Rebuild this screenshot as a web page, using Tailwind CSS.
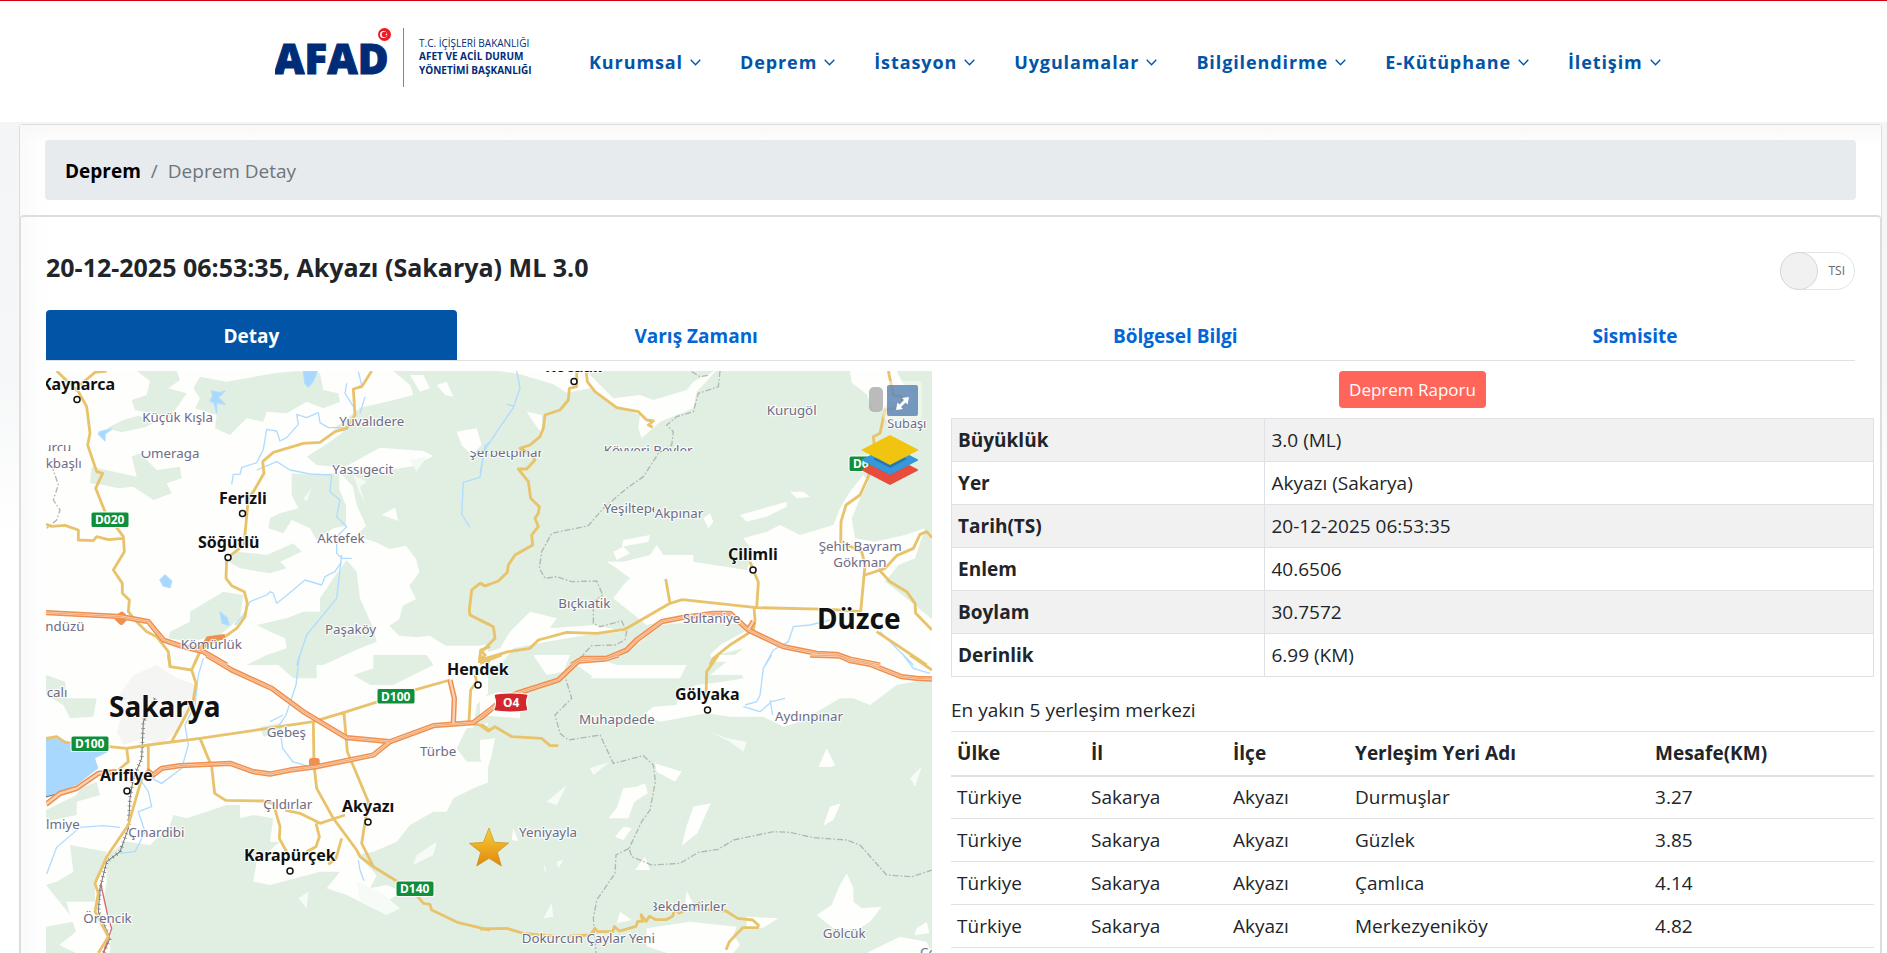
<!DOCTYPE html>
<html lang="tr">
<head>
    <meta charset="UTF-8">
    <meta name="viewport" content="width=device-width, initial-scale=1.0">
    <title>AFAD - Deprem Detay</title>
    <script src="https://cdn.jsdelivr.net/npm/@tailwindcss/browser@4"></script>
</head>
<body class="flex h-screen flex-col overflow-hidden bg-white font-['Open_Sans','Noto_Sans',sans-serif] text-[19px] text-[#212529]">

    <!-- Header -->
    <header class="flex h-[122px] shrink-0 items-start border-t border-[#d2000f] bg-white pl-[275px]">
        <a href="#" aria-label="AFAD" class="mt-[27px] block shrink-0">
            <svg width="264" height="60" viewBox="0 0 264 60" fill="#002c77" class="font-['Open_Sans','Noto_Sans',sans-serif]">
                <text x="-1" y="46" font-size="42" font-weight="800" stroke="#002c77" stroke-width="1">AFAD</text>
                <circle cx="109.500" cy="6.500" r="6.500" fill="#ed1c24"/>
                <circle cx="108.500" cy="6.500" r="3.500" fill="#fff"/>
                <circle cx="109.500" cy="6.500" r="2.800" fill="#ed1c24"/>
                <path d="M110 6.500l2.600-1-1.500 2.300v-2.600l1.500 2.300z" fill="#fff"/>
                <path d="M128.500 0v59" stroke="#6f86b0"/>
                <text x="144" y="19" font-size="10">T.C. İÇİŞLERİ BAKANLIĞI</text>
                <text x="144" y="32" font-size="10" font-weight="700">AFET VE ACİL DURUM</text>
                <text x="144" y="46" font-size="10" font-weight="700">YÖNETİMİ BAŞKANLIĞI</text>
            </svg>
        </a>
        <nav class="ml-[50px] mt-[48px] flex gap-[39px] whitespace-nowrap text-[18px] leading-[26px] font-bold tracking-wider text-[#0254a6]">
            <a href="#" class="flex items-center gap-[7px]">Kurumsal <svg width="11" height="7" viewBox="0 0 11 7" fill="none" stroke="currentColor" stroke-width="1.300"><path d="M.7.8l4.800 5 4.800-5"/></svg></a>
            <a href="#" class="flex items-center gap-[7px]">Deprem <svg width="11" height="7" viewBox="0 0 11 7" fill="none" stroke="currentColor" stroke-width="1.300"><path d="M.7.8l4.800 5 4.800-5"/></svg></a>
            <a href="#" class="flex items-center gap-[7px]">İstasyon <svg width="11" height="7" viewBox="0 0 11 7" fill="none" stroke="currentColor" stroke-width="1.300"><path d="M.7.8l4.800 5 4.800-5"/></svg></a>
            <a href="#" class="flex items-center gap-[7px]">Uygulamalar <svg width="11" height="7" viewBox="0 0 11 7" fill="none" stroke="currentColor" stroke-width="1.300"><path d="M.7.8l4.800 5 4.800-5"/></svg></a>
            <a href="#" class="flex items-center gap-[7px]">Bilgilendirme <svg width="11" height="7" viewBox="0 0 11 7" fill="none" stroke="currentColor" stroke-width="1.300"><path d="M.7.8l4.800 5 4.800-5"/></svg></a>
            <a href="#" class="flex items-center gap-[7px]">E-Kütüphane <svg width="11" height="7" viewBox="0 0 11 7" fill="none" stroke="currentColor" stroke-width="1.300"><path d="M.7.8l4.800 5 4.800-5"/></svg></a>
            <a href="#" class="flex items-center gap-[7px]">İletişim <svg width="11" height="7" viewBox="0 0 11 7" fill="none" stroke="currentColor" stroke-width="1.300"><path d="M.7.8l4.800 5 4.800-5"/></svg></a>
        </nav>
    </header>

    <!-- Page -->
    <main class="flex min-h-0 flex-1 flex-col bg-linear-to-b from-[#f4f5f6] via-[#f6f7f8] via-30% to-white to-50% pt-[2px] pr-[5px] pl-[19px]">
        <div class="flex min-h-0 flex-1 flex-col rounded-t border border-b-0 border-[#dcdede] bg-white bg-linear-to-r from-[#fafafa] to-white to-[28px]">
            <div class="bg-linear-to-b from-[#f8f8f8] to-transparent to-[20px] px-[25px] pt-[15px] pb-[15px]">
                <ol class="flex h-[60px] items-center rounded bg-[#e7ebee] px-5 pt-[2px]">
                    <li><a href="#" class="font-bold text-black">Deprem</a></li>
                    <li class="text-[#6c757d]"><span class="px-[10px]">/</span>Deprem Detay</li>
                </ol>
            </div>

            <div class="flex min-h-0 flex-1 flex-col rounded-t border border-t-2 border-b-0 border-[#dcdede] px-[25px] pt-[35px]">
                <div class="flex items-start justify-between">
                    <h1 class="text-[25px] leading-[30px] font-bold">20-12-2025 06:53:35, Akyazı (Sakarya) ML 3.0</h1>
                    <label class="relative flex h-[38px] w-[75px] items-center justify-end rounded-full border border-[#e4e4e4] bg-white pr-[9px] text-[12px] text-[#666]">
                        <input type="checkbox" class="absolute top-[-1px] left-[-1px] size-[38px] appearance-none rounded-full border border-[#d8d8d8] bg-[#f1f1f1]">
                        TSI
                    </label>
                </div>

                <!-- Tabs -->
                <div role="tablist" class="mt-[20px] flex border-b border-[#dee2e6] font-bold text-[#0366d6]">
                    <button role="tab" aria-selected="true" class="h-[50px] flex-auto rounded-t bg-[#0254a6] px-5 pt-[2px] text-white">Detay</button>
                    <button role="tab" class="h-[50px] flex-auto px-5 pt-[2px]">Varış Zamanı</button>
                    <button role="tab" class="h-[50px] flex-auto px-5 pt-[2px]">Bölgesel Bilgi</button>
                    <button role="tab" class="h-[50px] flex-auto px-5 pt-[2px]">Sismisite</button>
                </div>

                <div class="mt-[10px] -mr-[19px] grid min-h-0 flex-1 grid-cols-[24fr_25fr] gap-[19px]">
                    <!-- Map -->
                    <div class="relative overflow-hidden bg-[#e1efe2]">
                        <svg viewBox="0 0 886 582" preserveAspectRatio="xMinYMin slice" class="absolute inset-0 size-full font-['Noto_Sans',sans-serif]">
                            <defs>
                                <clipPath id="above"><path d="M-100 0h1500v258H-100z"/></clipPath>
                                <clipPath id="below"><path d="M-100 258h1500v300H-100z"/></clipPath>
                                <clipPath id="bekdemir"><path d="M521 700h300v100H521z"/></clipPath>
                                <clipPath id="yesil"><path d="M300 400h222v80H300z"/></clipPath>
                                <linearGradient id="gold" x2="0" y2="1"><stop offset="0" stop-color="#f7d038"/><stop offset="1" stop-color="#e2860b"/></linearGradient>
                            </defs>
                            <path d="M0 0h442v582H0z" fill="#fefefd"/>

                            <!-- Land: north west -->
                            <g transform="translate(-6 -6) scale(.33333)" fill="#e1efe2">
                                <path d="M1060 18l50 42 10 30-80 20-80 18-50 42-30 20 30 10-40 30-70 45 30 25 80 8 110-60 130 10 30 15-60 30-90 15-110 2-95 10-70-5v65l20 40-55 15-30 15-5 30 45 15 25-40 55 25 20 35 50-35 38-8v-60l-20-50 0-50 40 40 12 58 28 62-30 30 60 20 40 20 50-10 30 40 10 40-30 40 20 40-40 20-10 40-30 20 30 30 50 5 40-5 50 30h100l50-10h30V18z"/>
                                <path d="M290 18l40 30-10 42-45 15 10 30 50 10 50 20 55-80-55-15 35-25-10-27zM250 165l-50 25 45 12 70-15 30-15-50-20z"/>
                                <path d="M480 35l80 15 140-25 70-7 70 7 10 50 45 10 5 25-50 20-50-20-60 35-60-5-10 30-50-10-50 50-45-20 5-40-65-20 15-30-20-30z"/>
                                <path d="M155 305l135 30-15-60 25-10 50 50 70-10 5 35-45 15 15 30-55 20-60-40-45 5-45-10-40-5z"/>
                                <path d="M590 560l90 10 80-35 25 25-65 30 20 20-50 15-90-15-35-20z"/>
                                <path d="M390 800l60-30v-30l100-60 60 10-10 70-60 50-90 20-65-10z"/>
                                <path d="M920 585l30 35 10 80 40 90 10 40-50 20-110 50H620l60-30 60-20-5-30-45-20-40-20 90-20 50-20h50v-40l40-60z"/>
                                <path d="M1025 450l40-22 10 40-25-10z" fill="#fefefd"/>
                                <path d="M1250 200l60-10 15 50-30 30-30-30zM1110 30l40 0 20 40-30 10zM1190 60l30-10 20 45-25-5z" fill="#fefefd"/>
                                <path d="M940 330l40 20-20 15 15 50-20-40zM1110 285l50-10-30 45zM790 400l25-30-15 40z" fill="#f3f9f3"/>
                            </g>
                            <!-- Land: north east -->
                            <g transform="translate(434 -6) scale(.33333)" fill="#fefefd">
                                <path d="M60 18l60 10 100 30 40 25 70-13 70 50 80 30-5 40 10 30 55-50 100-40 10-50 60-65-70 35-20 25-100 30-40-15-80 10-70-70-10-12z"/>
                                <path d="M140 140l45 10 5 60-20-25z"/>
                                <path d="M1110 18l5 35 45 35 20 50 30-10 20-20 60 10 20-20-40-40-20-40z"/>
                                <path d="M400 700l30-40 20-20-40-30-30-20h50l80-20 20-30 20 30h90v20l60 10 100 15 20-55-30-40 70-20 40-20 60 30 100-30 20-50 30-50 40-50 15 20-25 50-25 60 10 60 60 10 90-20 60-20-30 90-50 20-40 50 40 30 110 90v160H690l100-80-80 20-70 0-20 30-20 40H330l80-60 130-110-40 10z"/>
                                <path d="M90 800l60-60 80 20-20 30 140-10 80 20-110 10-120 20-100 20-40 50H0v-30l60-20z"/>
                                <path d="M780 450l140-40 0 15-60 30-60 15zM930 380l40 0 20 15-40 5zM670 460l20-15 10 25-15 20zM430 525l80-15-5 20-80 15zM400 560l30-15 20 20-40 20z"/>
                                <path d="M640 770l190 10-110 60-60 60-70 0-250 0 60-20 80-50 60-50z" fill="#e1efe2"/>
                            </g>
                            <!-- Land: south west -->
                            <g transform="translate(-6 284) scale(.33333)" fill="#e1efe2">
                                <path d="M200 600l60-40 70 10 60-60 10-30 40 10 60-20 60-20h40v40l40-10 60 10-10 70h30l-70 60-10 60 50 10 150-40h60l-40 50 60 20 80 40 90-50-50-20-50 10 20-40-60-60 50-10 70-30 40-50 70-40h40l20-40 60-30 50-20v514H210l5-94-25-60 10-60z"/>
                                <path d="M18 60l57 20 5 50h90l-10 55-70 5-20-40-52-30zM90 570l110 20-35 90v60H80l10 40-72-90 32-10 50-30zM18 815l80-15 10 30-50 40 50 24H18zM18 465l92-45 10-20 50-20 10 40-70 20v40l-92 20z"/>
                                <path d="M710 0h120v70h-70l-45-40zM940 60l60-20V0h160l20 30-80 40-40 20h-70zM1250 280l30-60 70-10v110l-70 0zM1310 150l40-40v90l-50 20zM660 215l60-10 10 30-60 10z"/>
                                <path d="M950 680l70 30 60 50-40 20-80-40zM775 730l30-20-5 50zM1130 600l60-40-10 40-60 30z" fill="#f7fbf7"/>
                                <path d="M230 130l50-70 70-30 60 40 60 20-20 70-30 60-60 50-50-20-60 20-20-40 20-60z" fill="#f5f5f4"/>
                                <path d="M18 250h42l35 15 110 25-40 20 10 30-65 50-50 20-42 20z" fill="#a9d8ff"/>
                            </g>
                            <!-- Land: south east -->
                            <g transform="translate(434 284) scale(.33333)" fill="#fefefd">
                                <path d="M690 0h666v70l-106 20-80 60-50-20h-40l-120 70-50 15-60-30h-100l-70-10-140 25-50-20 30-25 70-5 10-40 50-20 80-10 60-10-20-50-70 0z"/>
                                <path d="M160 0h110l-20 50-50 10zM0 130l60-20 60 40 0 40-60-5-60-5zM0 255l45-5-10 50-15 50-20-40zM290 30l60-20 60 20 0 30-70 5z"/>
                                <path d="M525 325l80 25-20 30-55-30zM430 400l40-5 25-10 8 30-40 25-18 50h-60l25-30zM640 455l52-10-40 90-47 37 15-60zM1040 280l25 50-10 6h-40zM1050 455l32-10-22 50-30 17zM430 515l25 5-25 35-25-10zM495 605l15 40h-45zM100 520l15 38-20-3z"/>
                                <path d="M1075 700l25-45 20 45v40l25 20 60-5-35 45-40 25-70-5-50-40 45-30zM800 785l95 5-45 28-50 5zM620 708l20 40-25 0zM420 770l35 25-45 10zM500 820l130-20 90 10 50 5-10 25 20 30-20 24H560l-60-20zM1260 845l80 15 16 34h-196zM1310 820l30-20 8 35-45 5z"/>
                                <path d="M330 340l60-20-50 40zM200 440l60-50-30 60zM690 230l50 20 60 10-10 30-40-30zM1290 370l35-35-20 60zM190 790l25-45 5 40zM230 620l20-5-15 25zM190 625l10 20-5 5z" fill="#f7fbf7"/>
                            </g>

                            <!-- Rivers and lakes -->
                            <g transform="translate(-6 -6) scale(.33333)" fill="none" stroke="#b0dcff" stroke-width="4" stroke-linejoin="round">
                                <path d="M920 55l-5 30 25 40M955 20l10 40-20 10M975 95l-15 50M920 188h-55l-25-15-5-30-35 15-30-10 5 30-35 40-20 10-10-30-30-5-10 60-20 40-45 15-5 20h-20l-5 30M650 315l60-25 40 25 60 12 65 3-5 50 30 25-10 50 30 30-30 30 0 50 15 15h30M905 590l-20 30-30 15-10 25-50-15-60 50-25 20-10-30-10-5-10 10-50 20-20 40-25 30M905 570l-15 130-90 110-30 90M1350 232l-15 10-15 95-50 15-5 95 25 40"/>
                                <path d="M180 200l35-8-20 15v20l-20-20zM515 78l25 5 15-5-20 20 20 20-25-5v30l-8-30-12-5 8-15zM790 18h42l-12 30-15 18-10-10zM360 645l15-15 20 18-5 20-20-5zM540 740l22 20 5 20-20-5z" fill="#a9d8ff"/>
                            </g>
                            <g transform="translate(434 -6) scale(.33333)" fill="none" stroke="#b0dcff" stroke-width="4">
                                <path d="M110 18l10 50-20 60-45 65-40 60-15 70M80 118l20 5M1050 765l-60 15-50 5-15 45-45 25-25 45M1200 800l60 60 40 40"/>
                            </g>
                            <g transform="translate(-6 284) scale(.33333)" fill="none" stroke="#b0dcff" stroke-width="4">
                                <path d="M778 0l-10 90-30 90-20 30 10 70 30 40 60 18M690 200l40-20M490 10l-15 50-10 90-30 60 10 60-20 70-60 45-30-15M305 380l20 30 10 45-40 15 20 60-30 60-45 5M240 517l-50-5-70 5-70 60-30 80M955 615l5 30 12 32M180 690v40"/>
                            </g>
                            <g transform="translate(434 284) scale(.33333)" fill="none" stroke="#b0dcff" stroke-width="4">
                                <path d="M875 0l-25 40-10 80-10 20-35 10M790 155l50 15 35-30 40-10M870 135l8 45M1270 0l30 40 50 15"/>
                            </g>

                            <!-- Province borders and railways -->
                            <g fill="none" stroke="#b3b6b3" stroke-width="4" stroke-dasharray="18 6 5 6">
                                <path transform="translate(434 -6) scale(.33333)" d="M720 18l-5 47-60 20-15 55-50 15-30 25 20 20-5 40-40 25-45 70-50 35-70 60-45 52-110 23-30 55-7 50 17 30 35-5 45 15 75-2 18 42-28 20v65l20 10 65-17 15 32-5 25-30 15-70 2-55 58M635 20l25 15 30-5"/>
                                <path transform="translate(434 284) scale(.33333)" d="M310 0l-55 65 20 65-50 50 15 55 25 20 95-15 40 85 90-23 30 28 6 50-16 85-25 35-38 80 8 25 60 25 85-5 55-33 60-9 45-28 120-25 50 2 70 16 100 7 40 15 80 90 75 5 61-20M447 580l-39 20-3 55-55 80-10 55 8 104"/>
                                <path transform="translate(-6 -6) scale(.33333)" d="M35 300l20 60-15 45 20 30-10 30-30 25"/>
                            </g>
                            <g transform="translate(-6 284) scale(.33333)" fill="none">
                                <path d="M345 130l-35 70-5 110-25 60-10 60-5 90-25 70-40 30-20 80-5 70 35 80-20 44M18 425l80-20 70-50" stroke="#777" stroke-width="3"/>
                                <path d="M345 130l-35 70-5 110-25 60-10 60-5 90-25 70-40 30-20 80-5 70 35 80-20 44" stroke="#777" stroke-width="12" stroke-dasharray="2 12"/>
                                <path d="M182 685l23 105 10 30-25 74" stroke="#d8676a" stroke-width="4"/>
                            </g>

                            <!-- State roads -->
                            <g fill="none" stroke="#e8c36b" stroke-width="8.500" stroke-linejoin="round">
                                <path transform="translate(-6 -6) scale(.33333)" d="M50 18L115 80l25 45 10 80-7 35 27 80 18 5-21 45 28 70 55 75 3 45-33 55 27 40v30l21 20-3 35 20 25 35 35 30 15 35 45 5 40M120 60l45-38 35-4M18 478l17 6 40-3 40 14v30l45 2 10-12 35 9 45-4M995 18l-30 47-25 7 5 78-25 40-35 10-45 32-50 3-90 27-32 28 4 35-32 55-15 20-13 140-52 40-2 60 17 22 38 18 9 35-7 40-25 35-35 25-55 25-20 20-18 40M1350 780l-60-30-2-15 7-60 25-20 15 7 15-4M1350 845l-28 10-4 35 32-10"/>
                                <path transform="translate(434 -6) scale(.33333)" d="M290 18v47l-22 5-3 35-25 30-45 15-5 40-10 25-30 25-30 10 35 20 10 15-25 27h-25l30 38 7 50 26 25-3 20-10 15 10 25-20 25 3 30-53 30-20 30-3 22-27 26-40 15-15-8M318 18l4 32 23 30 65 48 65 12 25 25 20 3-15 12 13 7M1225 18l15 72 25 5v30l-50 10-15 70-20 10 5 45-20 75-25 55-42 30-15 50-1 60 63 30 10 40-13 140M1356 518l-16-18-20 8-20 42-50 22-35 38-60 20M1195 612l35 38 50 30 25 35 2 30 49 50M0 885l85-25 65-10 25-25 85-23 90 3 85-12 135-78 37-11 223 24 225 5 87 7M557 642l13 73M810 590l10 25 15 37-5 76h-8l3 37-5 30-70 45-50 40-10 20M1190 800l150 100M0 765l40 20 5 35-40 40 10 10-15 15"/>
                                <path transform="translate(-6 284) scale(.33333)" d="M385 0l5 35 65 10 20-45M455 45l13 40-8 50-30 60-35 65M18 250l32-5 25 17 185 18 65-10 155-20 340-50 100-30 210-67 100-28M325 270v75M260 280l5 40-30 25M480 250l35 85 9 80 33 21 113 2 30 7 20 70-2 35 27 50M820 200l2 130 8 70 50 90 70 95 10 20 40 30 65 40 65 45 20 25 20 3 5 17 80 38 95 22M912 175l10 115 63 150-20 125 35 70M735 465l45 10 60 30 75-25M828 505l10 40-10 30-28 15M905 550l-17 60-23 18M305 370l-40 140-65 95-35 80 10 30-10 55 40 75-30 49M1305 60l5 20-18 25-5 95M1290 205l40 7 20 16M1350 20h-32l4-20"/>
                                <path transform="translate(434 284) scale(.33333)" d="M0 25L65 0M715 0l-35 50-2 70M1290 0l66 45M0 210l25 18 20-13 50 30 90 5 25 22h25M0 822l80-2 50 15 110 10 90-5 15-20 8 10 20 0 25 0 5-15 15 13 50-14 5-15 15 0-5-20 15 20 10-15 20 10 30 0 20-10 5-20 15 10 20-10h20l20-20 20 20 60 4 35 22 45 5 17 15-2 8-45 0-40 42-10 24"/>
                            </g>

                            <!-- Motorways -->
                            <g fill="none" stroke-linejoin="round">
                                <g stroke="#ef8f50" stroke-width="16">
                                    <path transform="translate(-6 -6) scale(.33333)" d="M18 743l227 12 80 15 45 55 60 20 60 15 70 40M555 815l-50 7-25 35M230 758l16-10 10 10-12 14z"/>
                                    <path transform="translate(434 -6) scale(.33333)" d="M275 900l35-20h70l60-25 30-30 75-55 65-13 90-12h50l55 50 105 50 100 20 60 3 40 14 90 18M805 795l15-27"/>
                                    <path transform="translate(-6 284) scale(.33333)" d="M500 0l75 45 120 55 95 70 130 78 130 12M18 448l42-33 50-15 65-45 55-5M320 345l20 15 25-20 55-8 150-7 70 25 50 7 60-12 80-10 170-35 50-40 130-48 120-9 50-38M1230 75l13 55-3 75M815 335v-18h16v18"/>
                                    <path transform="translate(434 284) scale(.33333)" d="M0 190l60-50 50-25 125-40 60-57 80-6 40-12M990 0l90 3 30 14 60 11 95 37 45 5 46 2"/>
                                </g>
                                <g stroke="#fbd3b4" stroke-width="7">
                                    <path transform="translate(-6 -6) scale(.33333)" d="M18 743l227 12 80 15 45 55 60 20 60 15 70 40"/>
                                    <path transform="translate(434 -6) scale(.33333)" d="M275 900l35-20h70l60-25 30-30 75-55 65-13 90-12h50l55 50 105 50 100 20 60 3 40 14 90 18M805 795l15-27"/>
                                    <path transform="translate(-6 284) scale(.33333)" d="M500 0l75 45 120 55 95 70 130 78 130 12M18 448l42-33 50-15 65-45 55-5M340 360l25-20 55-8 150-7 70 25 50 7 60-12 80-10 170-35 50-40 130-48 120-9 50-38M1230 75l13 55-3 75"/>
                                    <path transform="translate(434 284) scale(.33333)" d="M0 190l60-50 50-25 125-40 60-57 80-6 40-12M990 0l90 3 30 14 60 11 95 37 45 5 46 2"/>
                                </g>
                                <g stroke="#ef8f50" stroke-width="2">
                                    <path transform="translate(-6 -6) scale(.33333)" d="M18 743l227 12 80 15 45 55 60 20 60 15 70 40"/>
                                    <path transform="translate(434 -6) scale(.33333)" d="M275 900l35-20h70l60-25 30-30 75-55 65-13 90-12h50l55 50 105 50 100 20 60 3 40 14 90 18"/>
                                    <path transform="translate(-6 284) scale(.33333)" d="M500 0l75 45 120 55 95 70 130 78 130 12M340 360l25-20 55-8 150-7 70 25 50 7 60-12 80-10 170-35 50-40 130-48 120-9 50-38"/>
                                    <path transform="translate(434 284) scale(.33333)" d="M0 190l60-50 50-25 125-40 60-57 80-6 40-12M990 0l90 3 30 14 60 11 95 37 45 5 46 2"/>
                                </g>
                            </g>

                            <!-- Town markers -->
                            <g fill="#fff" stroke="#111" stroke-width="1.500">
                                <circle cx="31" cy="28.500" r="3"/><circle cx="196.500" cy="142.500" r="3"/><circle cx="182" cy="186.500" r="3"/>
                                <circle cx="528" cy="10.500" r="3"/><circle cx="707" cy="199" r="3"/><circle cx="432" cy="314" r="3"/>
                                <circle cx="661.500" cy="339" r="3"/><circle cx="81" cy="420" r="3"/><circle cx="322" cy="451" r="3"/><circle cx="244" cy="500" r="3"/>
                            </g>

                            <!-- Village labels -->
                            <g fill="#6f6c85" stroke="#fff" stroke-opacity=".8" stroke-width="7" paint-order="stroke" stroke-linejoin="round" font-size="40">
                                <g transform="translate(-6 -6) scale(.33333)">
                                    <text x="307" y="172">Küçük Kışla</text>
                                    <text x="898" y="183">Yuvalıdere</text>
                                    <text x="-15" y="260" clip-path="url(#above)">ğurcu</text>
                                    <text x="17" y="308">kbaşlı</text>
                                    <text x="302" y="278" clip-path="url(#below)">Ömerağa</text>
                                    <text x="877" y="326">Yassıgecit</text>
                                    <text x="832" y="535">Aktefek</text>
                                    <text x="16" y="797">ndüzü</text>
                                    <text x="855" y="806">Paşaköy</text>
                                    <text x="422" y="853">Kömürlük</text>
                                </g>
                                <g transform="translate(434 -6) scale(.33333)">
                                    <text x="860" y="149">Kurugöl</text>
                                    <text x="1222" y="190" font-size="38">Subaşı</text>
                                    <text x="-32" y="276" clip-path="url(#below)">Şerbetpınar</text>
                                    <text x="371" y="270" clip-path="url(#above)">Köyyeri Beyler</text>
                                    <text x="371" y="445" clip-path="url(#yesil)">Yeşiltepe</text>
                                    <text x="524" y="460">Akpınar</text>
                                    <text x="1016" y="558">Şehit Bayram</text>
                                    <text x="1060" y="606">Gökman</text>
                                    <text x="235" y="729">Bıçkıatik</text>
                                    <text x="609" y="775">Sultaniye</text>
                                </g>
                                <g transform="translate(-6 284) scale(.33333)">
                                    <text x="20" y="126">calı</text>
                                    <text x="680" y="246">Gebeş</text>
                                    <text x="1140" y="303">Türbe</text>
                                    <text x="670" y="463">Çıldırlar</text>
                                    <text x="18" y="521">lmiye</text>
                                    <text x="265" y="546">Çınardibi</text>
                                    <text x="130" y="804">Örencik</text>
                                </g>
                                <g transform="translate(434 284) scale(.33333)">
                                    <text x="297" y="207">Muhapdede</text>
                                    <text x="885" y="198">Aydınpınar</text>
                                    <text x="117" y="546">Yeniyayla</text>
                                    <text x="507" y="768" clip-path="url(#bekdemir)">Bekdemirler</text>
                                    <text x="125" y="863">Dokurcun Çaylar Yeni</text>
                                    <text x="1028" y="850">Gölcük</text>
                                    <text x="1320" y="905">Ce</text>
                                </g>
                            </g>

                            <!-- Town labels -->
                            <g fill="#111" stroke="#fff" stroke-opacity=".8" stroke-width="2" paint-order="stroke" stroke-linejoin="round" font-weight="700" font-size="16">
                                <text x="-5" y="19">Kaynarca</text>
                                <text x="173" y="133">Ferizli</text>
                                <text x="152" y="177">Söğütlü</text>
                                <text x="499" y="1">Kocaali</text>
                                <text x="682" y="189">Çilimli</text>
                                <text x="401" y="304">Hendek</text>
                                <text x="629" y="329">Gölyaka</text>
                                <text x="54" y="410">Arifiye</text>
                                <text x="296" y="441">Akyazı</text>
                                <text x="198" y="490">Karapürçek</text>
                                <text x="63" y="346" font-size="28">Sakarya</text>
                                <text x="771" y="258" font-size="28">Düzce</text>
                            </g>

                            <!-- Road shields -->
                            <g fill="#0f8f3c" stroke="#fff" stroke-width="1">
                                <rect x="45" y="141" width="38" height="15.500" rx="2"/>
                                <rect x="331" y="317.500" width="38" height="15.500" rx="2"/>
                                <rect x="25" y="365" width="38" height="15.500" rx="2"/>
                                <rect x="350" y="510" width="38" height="15.500" rx="2"/>
                                <rect x="803" y="85" width="38" height="15.500" rx="2"/>
                                <path d="M450 323q17-2 30 0q3 0 1.500 3q-2 5 0 11q1 3-2 3q-14 2-29 0q-4 0-2-3q2-5 0-11q-1-3 1.500-3z" fill="#d0282c"/>
                            </g>
                            <g fill="#fff" font-size="12" font-weight="700">
                                <text x="49" y="153">D020</text>
                                <text x="335" y="330">D100</text>
                                <text x="29" y="377">D100</text>
                                <text x="354" y="522">D140</text>
                                <text x="807" y="97">D655</text>
                                <text x="457" y="336">O4</text>
                            </g>

                            <!-- Epicentre -->
                            <path transform="translate(434 284) scale(.33333)" d="M27 519l16 43 43 2-34 28 12 41-37-23-37 23 12-41-34-27 42-3z" fill="url(#gold)" stroke="#c98d1e" stroke-width="2"/>
                        </svg>

                        <span class="absolute top-[16px] right-[49px] h-[25px] w-[14px] rounded-[5px] bg-[#aaa]/80"></span>
                        <button aria-label="Tam ekran" class="absolute top-[10px] right-[10px] rounded-[4px] bg-white/40 p-[4px]">
                            <svg width="31" height="31" viewBox="0 0 31 31" class="block rounded-[2px] bg-[#5580b0]/80">
                                <path d="M22 12l-1.500 7.500-2-2-4.500 4.500 2 2-7 1 1.500-7.500 2 2 4.500-4.500-2-2z" fill="#fff"/>
                            </svg>
                        </button>
                        <button aria-label="Katmanlar" class="absolute top-[64px] right-[14px]">
                            <svg width="57" height="50" viewBox="0 0 57 50" class="block">
                                <path d="M0 35l29-15 29 15-29 15z" fill="#e74c3c"/>
                                <path d="M14 32l15 8 15-8-15-8z" fill="#b53b30"/>
                                <path d="M0 25l29-15 29 15-29 15z" fill="#3498db"/>
                                <path d="M12 24l17 9 17-9-17-9z" fill="#2878ae"/>
                                <path d="M0 15L29 0l29 15-29 15z" fill="#f1c40f"/>
                            </svg>
                        </button>
                    </div>

                    <!-- Details -->
                    <div class="min-w-0">
                        <div class="text-center leading-none">
                            <button class="h-[37px] rounded bg-[#ff6659] px-[10px] text-[17px] text-white">Deprem Raporu</button>
                        </div>
                        <table class="mt-[10px] w-full table-fixed border-collapse text-left">
                            <colgroup><col class="w-[34%]"><col></colgroup>
                            <tr class="h-[43px] bg-[#f1f1f1]"><th class="border border-[#dee2e6] px-[6px]">Büyüklük</th><td class="border border-[#dee2e6] px-[6px]">3.0 (ML)</td></tr>
                            <tr class="h-[43px]"><th class="border border-[#dee2e6] px-[6px]">Yer</th><td class="border border-[#dee2e6] px-[6px]">Akyazı (Sakarya)</td></tr>
                            <tr class="h-[43px] bg-[#f1f1f1]"><th class="border border-[#dee2e6] px-[6px]">Tarih(TS)</th><td class="border border-[#dee2e6] px-[6px]">20-12-2025 06:53:35</td></tr>
                            <tr class="h-[43px]"><th class="border border-[#dee2e6] px-[6px]">Enlem</th><td class="border border-[#dee2e6] px-[6px]">40.6506</td></tr>
                            <tr class="h-[43px] bg-[#f1f1f1]"><th class="border border-[#dee2e6] px-[6px]">Boylam</th><td class="border border-[#dee2e6] px-[6px]">30.7572</td></tr>
                            <tr class="h-[43px]"><th class="border border-[#dee2e6] px-[6px]">Derinlik</th><td class="border border-[#dee2e6] px-[6px]">6.99 (KM)</td></tr>
                        </table>

                        <h2 class="mt-[20px] mb-[8px] leading-[26px] font-medium">En yakın 5 yerleşim merkezi</h2>
                        <table class="w-full table-fixed border-collapse text-left">
                            <thead>
                                <tr class="h-[44px] border-t border-b-2 border-[#dee2e6]">
                                    <th class="w-[134px] px-[6px]">Ülke</th>
                                    <th class="w-[142px] px-[6px]">İl</th>
                                    <th class="w-[122px] px-[6px]">İlçe</th>
                                    <th class="w-[300px] px-[6px]">Yerleşim Yeri Adı</th>
                                    <th class="px-[6px]">Mesafe(KM)</th>
                                </tr>
                            </thead>
                            <tbody>
                                <tr class="h-[43px] border-b border-[#dee2e6]"><td class="px-[6px]">Türkiye</td><td class="px-[6px]">Sakarya</td><td class="px-[6px]">Akyazı</td><td class="px-[6px]">Durmuşlar</td><td class="px-[6px]">3.27</td></tr>
                                <tr class="h-[43px] border-b border-[#dee2e6]"><td class="px-[6px]">Türkiye</td><td class="px-[6px]">Sakarya</td><td class="px-[6px]">Akyazı</td><td class="px-[6px]">Güzlek</td><td class="px-[6px]">3.85</td></tr>
                                <tr class="h-[43px] border-b border-[#dee2e6]"><td class="px-[6px]">Türkiye</td><td class="px-[6px]">Sakarya</td><td class="px-[6px]">Akyazı</td><td class="px-[6px]">Çamlıca</td><td class="px-[6px]">4.14</td></tr>
                                <tr class="h-[43px] border-b border-[#dee2e6]"><td class="px-[6px]">Türkiye</td><td class="px-[6px]">Sakarya</td><td class="px-[6px]">Akyazı</td><td class="px-[6px]">Merkezyeniköy</td><td class="px-[6px]">4.82</td></tr>
                            </tbody>
                        </table>
                    </div>
                </div>
            </div>
        </div>
    </main>
</body>
</html>
